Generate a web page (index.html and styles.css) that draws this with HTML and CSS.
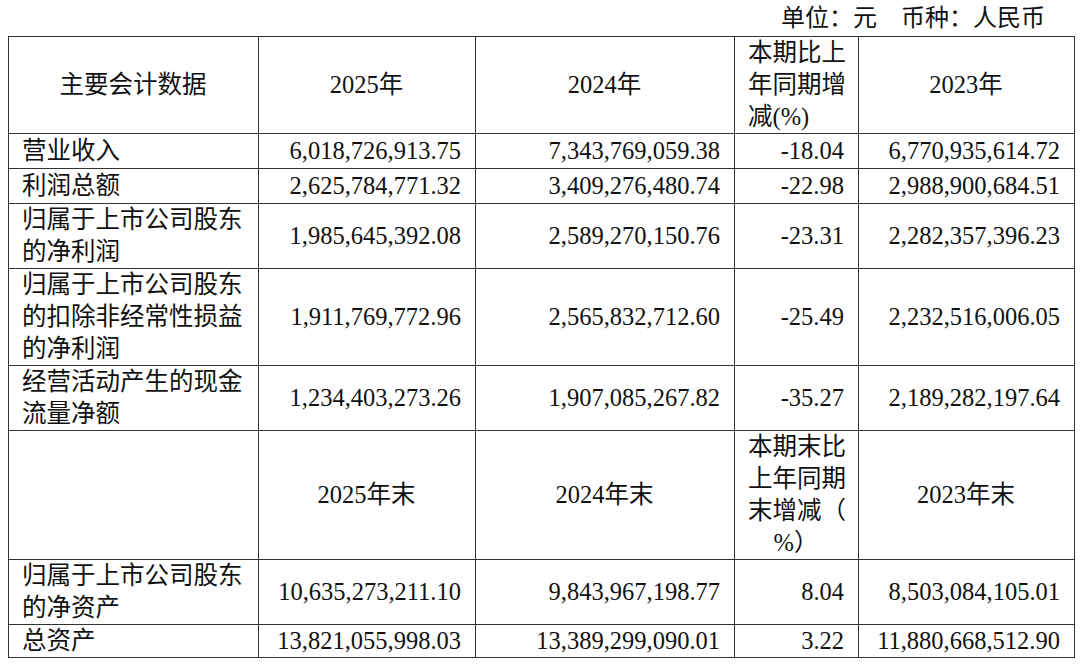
FILE: index.html
```html
<!DOCTYPE html>
<html lang="zh-CN">
<head>
<meta charset="utf-8">
<link rel="stylesheet" href="styles.css">
</head>
<body>
<div class="unit">单位：元　币种：人民币</div>
<table class="fin">
  <colgroup>
    <col class="c1"><col class="c2"><col class="c3"><col class="c4"><col class="c5">
  </colgroup>
  <tr class="h97">
    <td class="ctr">主要会计数据</td>
    <td class="ctr">2025年</td>
    <td class="ctr">2024年</td>
    <td class="pct">本期比上<br>年同期增<br>减(%)</td>
    <td class="ctr">2023年</td>
  </tr>
  <tr class="h35">
    <td class="lbl">营业收入</td>
    <td class="num">6,018,726,913.75</td>
    <td class="num">7,343,769,059.38</td>
    <td class="num">-18.04</td>
    <td class="num">6,770,935,614.72</td>
  </tr>
  <tr class="h35">
    <td class="lbl">利润总额</td>
    <td class="num">2,625,784,771.32</td>
    <td class="num">3,409,276,480.74</td>
    <td class="num">-22.98</td>
    <td class="num">2,988,900,684.51</td>
  </tr>
  <tr class="h65">
    <td class="lbl">归属于上市公司股东<br>的净利润</td>
    <td class="num">1,985,645,392.08</td>
    <td class="num">2,589,270,150.76</td>
    <td class="num">-23.31</td>
    <td class="num">2,282,357,396.23</td>
  </tr>
  <tr class="h98">
    <td class="lbl">归属于上市公司股东<br>的扣除非经常性损益<br>的净利润</td>
    <td class="num">1,911,769,772.96</td>
    <td class="num">2,565,832,712.60</td>
    <td class="num">-25.49</td>
    <td class="num">2,232,516,006.05</td>
  </tr>
  <tr class="h65b">
    <td class="lbl">经营活动产生的现金<br>流量净额</td>
    <td class="num">1,234,403,273.26</td>
    <td class="num">1,907,085,267.82</td>
    <td class="num">-35.27</td>
    <td class="num">2,189,282,197.64</td>
  </tr>
  <tr class="h129">
    <td></td>
    <td class="ctr">2025年末</td>
    <td class="ctr">2024年末</td>
    <td class="pct"><span class="ln">本期末比</span><span class="ln">上年同期</span><span class="ln">末增减（</span><span class="ln mid">%）</span></td>
    <td class="ctr">2023年末</td>
  </tr>
  <tr class="h66">
    <td class="lbl">归属于上市公司股东<br>的净资产</td>
    <td class="num">10,635,273,211.10</td>
    <td class="num">9,843,967,198.77</td>
    <td class="num">8.04</td>
    <td class="num">8,503,084,105.01</td>
  </tr>
  <tr class="h33">
    <td class="lbl">总资产</td>
    <td class="num">13,821,055,998.03</td>
    <td class="num">13,389,299,090.01</td>
    <td class="num">3.22</td>
    <td class="num">11,880,668,512.90</td>
  </tr>
</table>
</body>
</html>
```

FILE: styles.css
```css
html, body {
  background: #ffffff;
}
body {
  margin: 0;
  padding: 0 0 0 8px;
  font-family: "Liberation Serif", "Noto Sans CJK SC", serif;
  color: #111;
  font-size: 24.5px;
}
.unit {
  width: 1037px;
  height: 36px;
  line-height: 36px;
  text-align: right;
  font-size: 24px;
}
.fin {
  border-collapse: collapse;
  table-layout: fixed;
  width: 1066px;
}
.c1 { width: 250px; }
.c2 { width: 217px; }
.c3 { width: 259px; }
.c4 { width: 124px; }
.c5 { width: 216px; }
.fin td {
  border: 1px solid #333;
  padding: 0 14px 0 13px;
  line-height: 32px;
  vertical-align: middle;
  white-space: nowrap;
  overflow: visible;
}
.h97 { height: 96px; }
.h35 { height: 35px; }
.h65 { height: 65px; }
.h98 { height: 97px; }
.h65b { height: 64px; }
.h129 { height: 129px; }
.h66 { height: 65px; }
.h33 { height: 31px; }
.ctr { text-align: center; }
.lbl { text-align: left; }
.num { text-align: right; }
.pct { text-align: left; }
.ln { display: block; }
.mid { text-align: center; }
```
